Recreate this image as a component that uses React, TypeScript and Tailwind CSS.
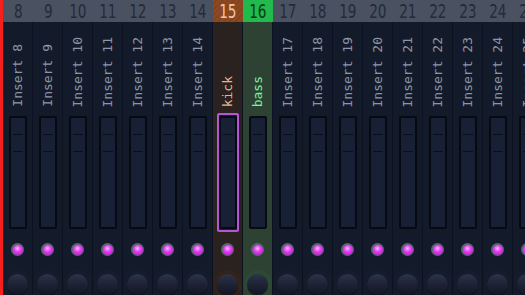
import React from "react";

type Track = { num: number; name: string; kind: "normal" | "kick" | "bass" };

const tracks: Track[] = Array.from({ length: 18 }, (_, i) => {
  const num = i + 8;
  if (num === 15) return { num, name: "kick", kind: "kick" };
  if (num === 16) return { num, name: "bass", kind: "bass" };
  return { num, name: `Insert ${num}`, kind: "normal" };
});

function Channel({ t }: { t: Track }) {
  const head =
    t.kind === "kick"
      ? "bg-[repeating-linear-gradient(135deg,#8d4a22_0px,#8d4a22_2px,#84441f_2px,#84441f_4px)] text-[#f2c4a4]"
      : t.kind === "bass"
      ? "bg-[#20bb4c] text-[#0b3b1b]"
      : "bg-[#4a5262] text-[#232b38]";
  const body =
    t.kind === "kick" ? "bg-[#2a221f]" : t.kind === "bass" ? "bg-[#2e4233]" : "bg-[#131b2b]";
  const label =
    t.kind === "kick" ? "text-[#e9b394]" : t.kind === "bass" ? "text-[#7df0a4]" : "text-[#8d96a6]";
  const halo =
    t.kind === "kick" ? "bg-[#33231b]" : t.kind === "bass" ? "bg-[#2c4a33]" : "bg-[#151d2d]";

  return (
    <div className="w-[30px] shrink-0 flex flex-col">
      <div className={`h-[22px] shrink-0 flex items-center justify-center ${head}`}>
        <span
          className="block text-[19px] leading-[22px] [transform:scaleX(0.8)]"
          style={{ fontFamily: '"DejaVu Sans Condensed", "Liberation Sans Narrow", sans-serif' }}
        >
          {t.num}
        </span>
      </div>
      <div className={`flex-1 flex flex-col items-center border-r border-[#0c1221] ${body}`}>
        <div className="h-[88px] w-full flex items-end justify-center pb-[3px]">
          <span
            className={`text-[13px] leading-none whitespace-nowrap [writing-mode:vertical-rl] [transform:rotate(180deg)] ${label}`}
            style={{ fontFamily: '"DejaVu Sans Mono", monospace' }}
          >
            {t.name}
          </span>
        </div>
        <div
          className={`mt-[3px] h-[119px] w-[22px] flex items-center justify-center rounded-[2px] ${
            t.kind === "kick" ? "border-2 border-[#b255d6]" : ""
          }`}
        >
          <div className="h-[113px] w-[18px] rounded-[2px] border-2 border-[#070a12] bg-[#172034] flex flex-col items-center pt-[16px] gap-[16px]">
            <div className="h-px w-[10px] bg-[#0a0f1a]" />
            <div className="h-px w-[10px] bg-[#0a0f1a]" />
          </div>
        </div>
        <div className="mt-[11px] h-[13px] w-[13px] rounded-full bg-[#5e6375] flex items-center justify-center">
          <div className="h-[10px] w-[10px] rounded-full bg-[radial-gradient(circle_at_45%_35%,#fbb6ff_0%,#e23cf0_40%,#a814c0_100%)]" />
        </div>
        <div className={`mt-[14px] h-[28px] w-[28px] rounded-full flex items-center justify-center ${halo}`}>
          <div className="h-[21px] w-[21px] rounded-full bg-[linear-gradient(180deg,#2d3349_0%,#1c2133_55%,#121627_100%)] shadow-[0_1px_1px_rgba(0,0,0,0.6)]" />
        </div>
      </div>
    </div>
  );
}

export default function App() {
  return (
    <div className="w-[525px] h-[295px] overflow-hidden flex bg-[#131b2b]">
      <div className="w-[3px] shrink-0 bg-[#f5201e]" />
      {tracks.map((t) => (
        <Channel key={t.num} t={t} />
      ))}
    </div>
  );
}
